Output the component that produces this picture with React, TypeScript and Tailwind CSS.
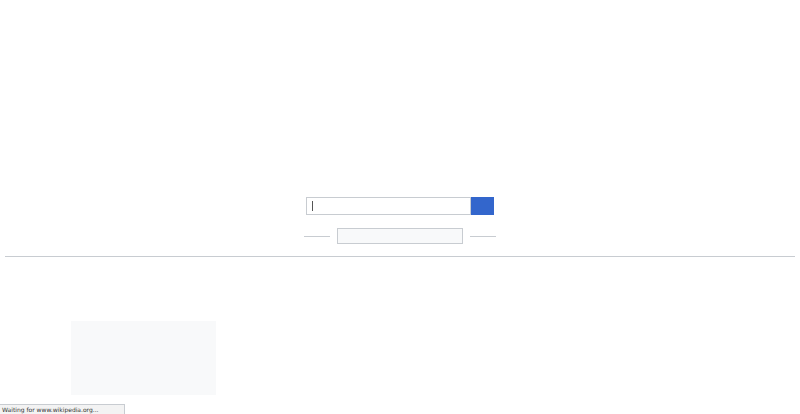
export default function App() {
  return (
    <div className="relative h-[414px] w-[800px] overflow-hidden bg-white font-['Liberation_Sans',sans-serif]">
      <div className="h-[197px]" />
      <div className="flex justify-center">
        <div className="flex h-[18px]">
          <div className="flex h-full w-[165px] items-center border border-[#c8ccd1] bg-white pl-[5px]">
            <div className="h-[10px] w-px bg-[#555]" />
          </div>
          <div className="h-full w-[23px] bg-[#3366cc]" />
        </div>
      </div>
      <div className="mt-[13px] flex items-center justify-center gap-[7px]">
        <div className="h-px w-[26px] bg-[#c8ccd1]" />
        <div className="h-[16px] w-[126px] border border-[#c8ccd1] bg-[#f8f9fa]" />
        <div className="h-px w-[26px] bg-[#c8ccd1]" />
      </div>
      <div className="mx-[5px] mt-[12px] h-px bg-[#c8ccd1]" />
      <div className="ml-[71px] mt-[64px] h-[74px] w-[145px] bg-[#f8f9fa]" />
      <div className="absolute bottom-0 left-0 flex h-[10px] w-[125px] items-center border-r border-t border-[#c8ccd1] bg-[#f3f3f3] pl-[2px] font-['DejaVu_Sans',sans-serif] text-[6px] leading-none text-[#333]">
        Waiting for www.wikipedia.org...
      </div>
    </div>
  );
}
